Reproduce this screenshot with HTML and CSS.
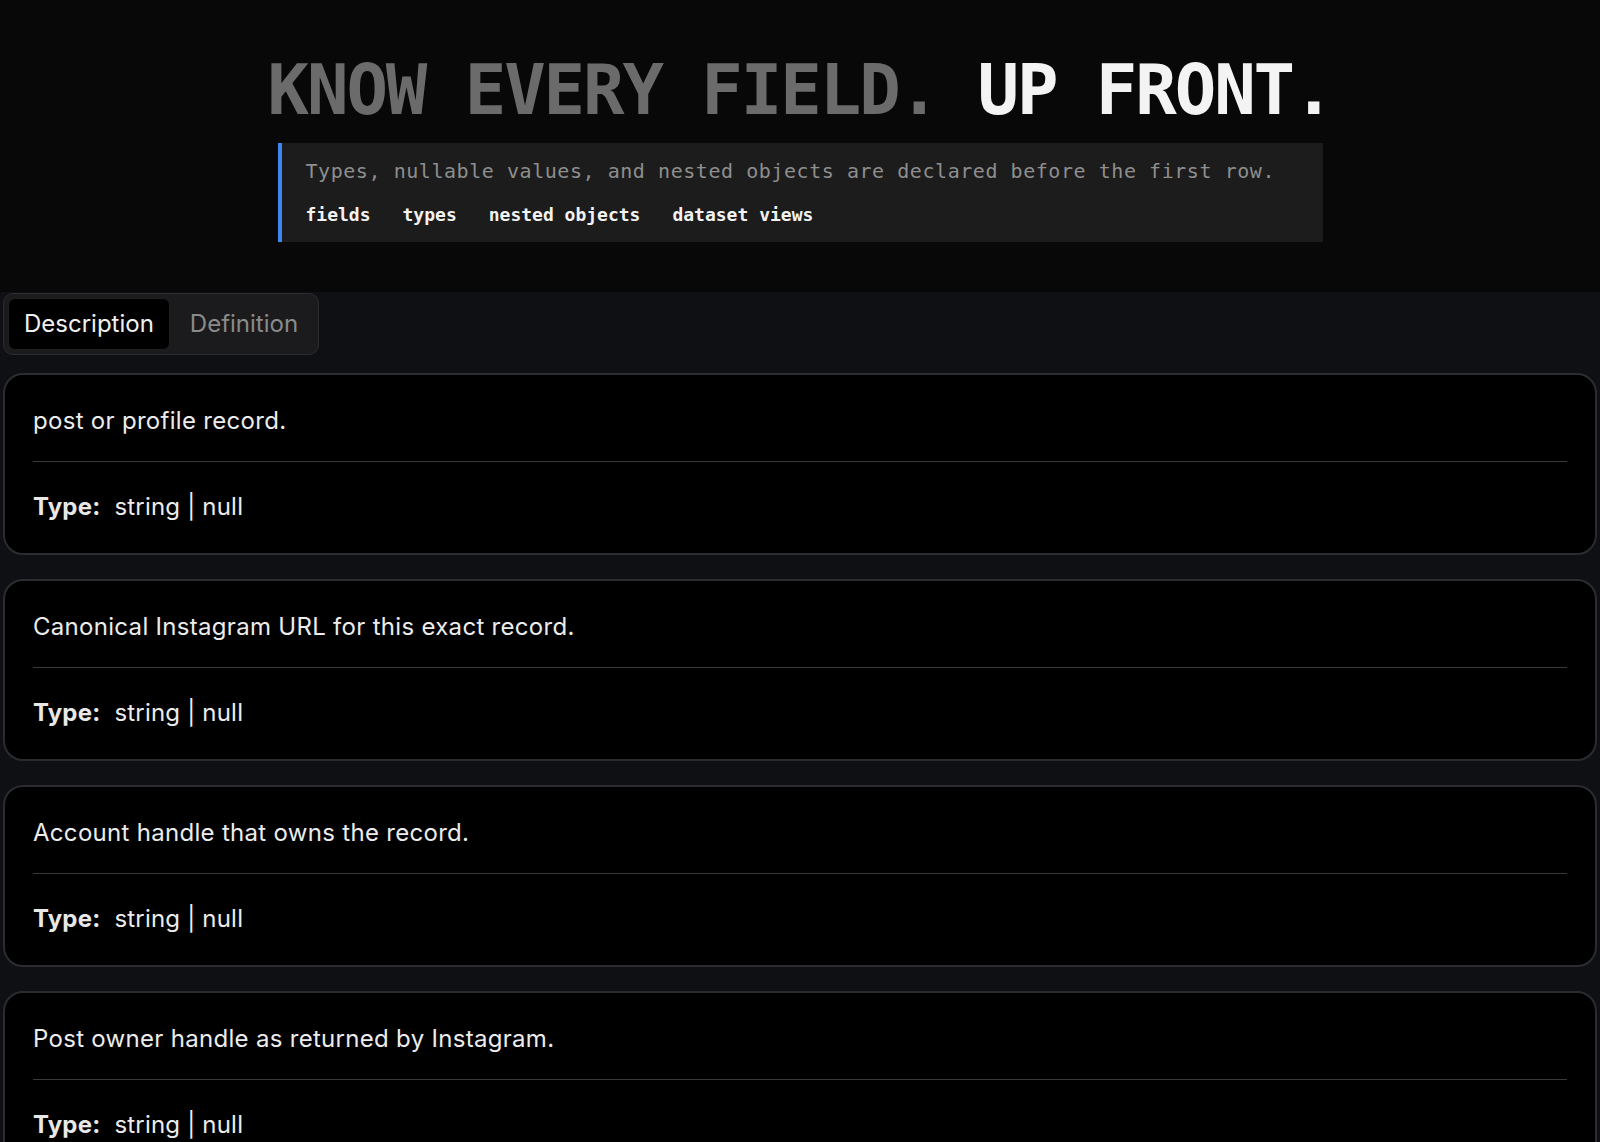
FILE: index.html
```html
<!DOCTYPE html>
<html lang="en">
<head>
<meta charset="utf-8">
<title>Know every field</title>
<link rel="stylesheet" href="styles.css">
</head>
<body>
<header class="hero">
  <h1 class="hero-title"><span class="dim">KNOW EVERY FIELD.</span> <span class="bright">UP FRONT.</span></h1>
  <div class="callout">
    <p class="callout-text">Types, nullable values, and nested objects are declared before the first row.</p>
    <ul class="tags">
      <li>fields</li>
      <li>types</li>
      <li>nested objects</li>
      <li>dataset views</li>
    </ul>
  </div>
</header>
<main class="schema">
  <div class="tabs">
    <button class="tab active">Description</button>
    <button class="tab">Definition</button>
  </div>
  <div class="cards">
    <section class="card">
      <p class="desc">post or profile record.</p>
      <hr class="divider">
      <p class="type"><strong class="type-label">Type:</strong><span class="type-value">string | null</span></p>
    </section>
    <section class="card">
      <p class="desc">Canonical Instagram URL for this exact record.</p>
      <hr class="divider">
      <p class="type"><strong class="type-label">Type:</strong><span class="type-value">string | null</span></p>
    </section>
    <section class="card">
      <p class="desc">Account handle that owns the record.</p>
      <hr class="divider">
      <p class="type"><strong class="type-label">Type:</strong><span class="type-value">string | null</span></p>
    </section>
    <section class="card">
      <p class="desc">Post owner handle as returned by Instagram.</p>
      <hr class="divider">
      <p class="type"><strong class="type-label">Type:</strong><span class="type-value">string | null</span></p>
    </section>
  </div>
</main>
</body>
</html>
```
FILE: styles.css
```css
* { box-sizing: border-box; }
html, body { margin: 0; padding: 0; }
body {
  background: #080808;
  color: #ececec;
  font-family: Inter, "Noto Sans", sans-serif;
  overflow: hidden;
}
.hero {
  display: flex;
  flex-direction: column;
  align-items: center;
  padding: 49px 0 50px;
  background: #080808;
}
.hero-title {
  margin: 0 0 11px;
  font-family: "DejaVu Sans Mono", "Liberation Mono", monospace;
  font-size: 69px;
  line-height: 1.2;
  font-weight: 700;
  letter-spacing: -2.1px;
  white-space: nowrap;
}
.dim { color: #6b6b6b; }
.bright { color: #f3f3f3; }
.callout {
  width: 1045px;
  background: #1c1c1c;
  border-left: 4px solid #3d87f0;
  padding: 16px 24px 16px;
}
.callout-text {
  margin: 0 0 21px;
  font-family: "DejaVu Sans Mono", monospace;
  font-size: 20px;
  line-height: 24px;
  letter-spacing: 0.55px;
  color: #8e8e8e;
}
.tags {
  list-style: none;
  margin: 0;
  padding: 0;
  display: flex;
  gap: 32px;
  font-family: "DejaVu Sans Mono", monospace;
  font-size: 18px;
  line-height: 22px;
  font-weight: 700;
  color: #f2f2f2;
}
.schema {
  background: #0e1014;
  padding: 1px 3px 40px;
}
.tabs {
  display: inline-flex;
  gap: 4px;
  padding: 4px;
  background: #1b1b1d;
  border: 1px solid #2c2c2f;
  border-radius: 10px;
}
.tab {
  font-family: Inter, sans-serif;
  font-size: 24px;
  line-height: 36px;
  padding: 7px 15px;
  border: 1px solid transparent;
  border-radius: 7px;
  background: transparent;
  color: #8a8a8a;
}
.tab.active {
  background: #000;
  color: #f0f0f0;
  border-color: #1f1f22;
}
.cards {
  display: flex;
  flex-direction: column;
  gap: 24px;
  margin-top: 18px;
}
.card {
  background: #000;
  border: 2px solid #2b2c30;
  border-radius: 20px;
  padding: 28px;
}
.desc {
  margin: 0 0 22px;
  font-size: 24px;
  line-height: 36px;
  letter-spacing: 0.3px;
  color: #ececec;
}
.divider {
  margin: 0;
  border: 0;
  height: 1px;
  background: #3a3a3a;
}
.type {
  margin: 27px 0 0;
  font-size: 24px;
  line-height: 36px;
  letter-spacing: 0.2px;
  color: #ececec;
}
.type-label {
  font-weight: 700;
  margin-right: 14px;
  color: #e8e8e8;
}
```
